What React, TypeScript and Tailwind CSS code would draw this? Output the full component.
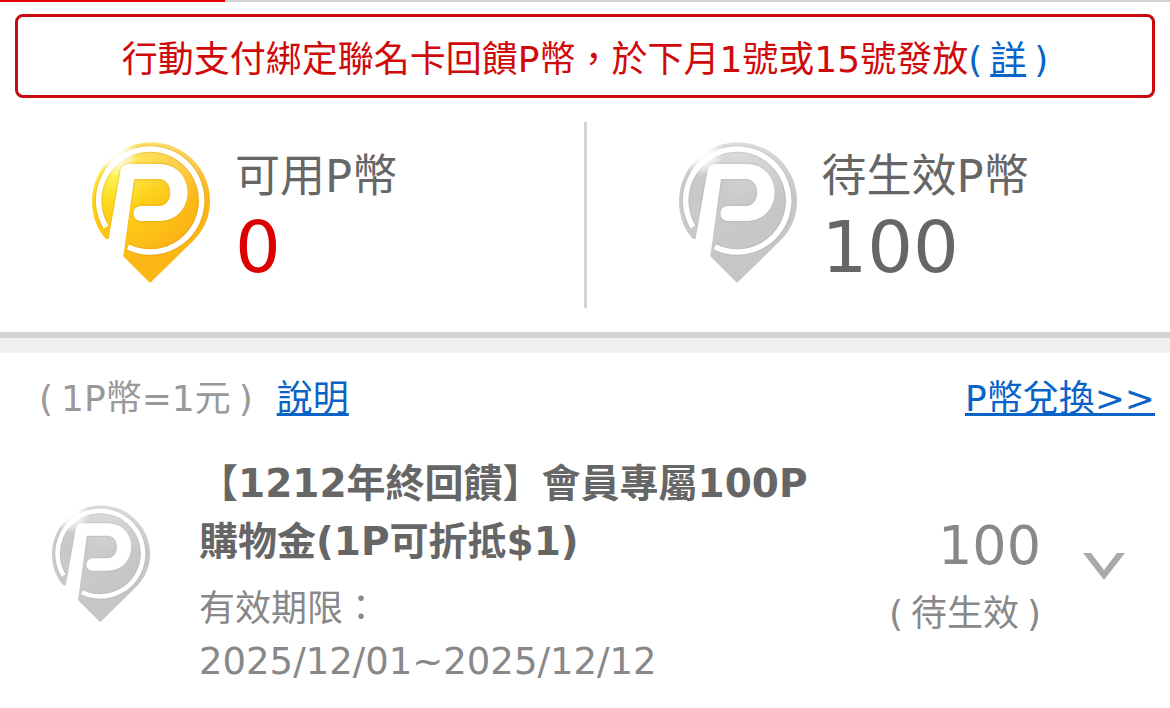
import { useId, useState } from "react";

type CoinTone = "gold" | "silver";

const coinColors: Record<CoinTone, { light: string; mid: string; deep: string; shade: string }> = {
  gold: { light: "#fff23a", mid: "#fdd015", deep: "#fbb616", shade: "#c98a1c" },
  silver: { light: "#c2c2c2", mid: "#cbcbcb", deep: "#c6c6c6", shade: "#a0a0a0" },
};

const pinOutline =
  "M71 12.5C103.500 12.5 130 38.500 130 71C130 88 123 101 113 111L70 153L27 110C18 101 12 88 12 71C12 38.500 38.500 12.5 71 12.5Z";

function CoinPin({ tone, className }: { tone: CoinTone; className: string }) {
  const id = useId();
  const c = coinColors[tone];
  return (
    <svg viewBox="12 12 118 142" className={className} aria-hidden="true">
      <defs>
        <radialGradient id={`${id}fill`} gradientUnits="userSpaceOnUse" cx="34" cy="44" r="88">
          <stop offset="0" stopColor={c.light} />
          <stop offset="0.45" stopColor={c.mid} />
          <stop offset="1" stopColor={c.deep} />
        </radialGradient>
        <radialGradient id={`${id}glow`} gradientUnits="userSpaceOnUse" cx="35" cy="23" r="23">
          <stop offset="0" stopColor="#fff" />
          <stop offset="0.4" stopColor="#fff" stopOpacity="0.85" />
          <stop offset="1" stopColor="#fff" stopOpacity="0" />
        </radialGradient>
        <linearGradient id={`${id}rim`} x1="0" y1="0" x2="0" y2="1">
          <stop offset="0" stopColor="#fff" stopOpacity="0.35" />
          <stop offset="0.4" stopColor="#fff" stopOpacity="0" />
        </linearGradient>
        <clipPath id={`${id}clip`}>
          <path d={pinOutline} />
        </clipPath>
      </defs>
      <path d={pinOutline} fill={`url(#${id}fill)`} />
      <path d={pinOutline} fill={`url(#${id}rim)`} />
      <g fill="none" stroke={c.shade} strokeOpacity="0.22" clipPath={`url(#${id}clip)`}>
        <path d="M26 97A51.500 51.500 0 1 1 48 117" strokeWidth="8" />
        <path d="M34 125L48 41.500H79C105 41.500 105 83.500 79 83.500H61" strokeWidth="18" strokeLinecap="round" strokeLinejoin="round" />
      </g>
      <circle cx="35" cy="23" r="23" fill={`url(#${id}glow)`} />
      <path d="M26 97A51.500 51.500 0 1 1 48 117" fill="none" stroke="#fff" strokeWidth="5.500" />
      <path
        d="M28.500 109L40.500 41Q41.500 34 49 34H79C117 34 117 91 79 91H61C51 91 51 76 61 76H79C94 76 94 49 79 49H54L43.500 125L41 130L20 109Z"
        fill="#fff"
      />
    </svg>
  );
}

function Balance({ tone, label, value, valueColor }: { tone: CoinTone; label: string; value: number; valueColor: string }) {
  return (
    <div className="flex min-w-0 flex-1 gap-[25px] pl-[92px] pt-5">
      <CoinPin tone={tone} className="h-[142px] w-[118px] shrink-0" />
      <div className="pt-[5px]">
        <h2 className="text-[45px] leading-[60px] text-[#666]">{label}</h2>
        <p className={`text-[72px] leading-[80px] ${valueColor}`}>{value}</p>
      </div>
    </div>
  );
}

export default function App() {
  const [open, setOpen] = useState(false);

  return (
    <main
      lang="zh-Hant"
      className="bg-white font-['DejaVu_Sans','Noto_Sans_CJK_TC',sans-serif] text-4xl text-[#888]"
    >
      <div className="h-[2px] bg-[#d3d3d3]">
        <div className="h-full w-[19.2%] bg-[#e00000]" />
      </div>

      <p className="mx-[15px] mt-3 rounded-lg border-3 border-[#c80a10] pb-[10px] pt-[18px] text-center leading-[50px] text-[#d00a0a]">
        行動支付綁定聯名卡回饋P幣，於下月1號或15號發放
        <span className="text-[#0a64c8]">
          (
          <a href="#detail" className="mx-2 underline decoration-3 underline-offset-2 [text-decoration-skip-ink:none]">
            詳
          </a>
          )
        </span>
      </p>

      <section className="mt-6 flex h-[186px]">
        <Balance tone="gold" label="可用P幣" value={0} valueColor="text-[#dc0000]" />
        <div className="w-[3px] bg-[#d3d3d3]" />
        <Balance tone="silver" label="待生效P幣" value={100} valueColor="text-[#666]" />
      </section>

      <div className="mt-6 h-[21px] border-t-6 border-[#d3d3d3] bg-[#f0f0f0]" />

      <section>
        <div className="flex justify-between pl-[39px] pr-[15px] pt-[21px] leading-[50px]">
          <div className="flex gap-6">
            <p className="text-[#999]">
              <span className="mr-2">(</span>1P幣=1元<span className="ml-2">)</span>
            </p>
            <a href="#about" className="text-[#0a64c8] underline decoration-3 underline-offset-2 [text-decoration-skip-ink:none]">
              說明
            </a>
          </div>
          <a href="#exchange" className="text-[#0a64c8] underline decoration-3 underline-offset-2 [text-decoration-skip-ink:none]">
            P幣兌換&gt;&gt;
          </a>
        </div>

        <article className="flex items-start pl-[52px] pr-[45px] pt-[31px]">
          <CoinPin tone="silver" className="mt-[50px] h-[118px] w-[98px] shrink-0" />
          <div className="ml-[49px] min-w-0 flex-1">
            <h3 className="text-[39px] font-bold leading-[58px] text-[#666]">
              【1212年終回饋】會員專屬100P
              <br />
              購物金(1P可折抵$1)
            </h3>
            <p className="pt-[11px] leading-[53px]">有效期限：</p>
            <p className="text-[37px] leading-[53px]">2025/12/01~2025/12/12</p>
          </div>
          <div className="pt-14 text-right">
            <p className="text-[54px] leading-[70px]">100</p>
            <p className="leading-[66px]">
              <span className="mr-2">(</span>待生效<span className="ml-2">)</span>
            </p>
          </div>
          <button
            type="button"
            aria-label="展開明細"
            aria-expanded={open}
            onClick={() => setOpen(!open)}
            className="ml-[42px] mt-[98px] shrink-0"
          >
            <svg viewBox="0 0 42 28" className="h-7 w-[42px]" fill="#aaa" aria-hidden="true">
              <path d="M0 0H8L21 17L34 0H42L21 27Z" />
            </svg>
          </button>
        </article>
      </section>
    </main>
  );
}
